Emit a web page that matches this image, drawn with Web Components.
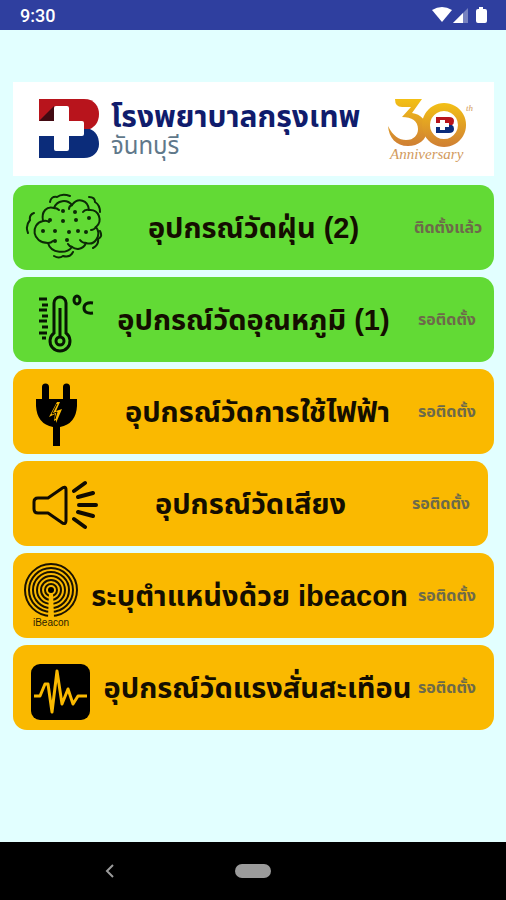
<!DOCTYPE html>
<html lang="th">
<head>
<meta charset="utf-8">
<meta name="viewport" content="width=device-width, initial-scale=1">
<title>โรงพยาบาลกรุงเทพ จันทบุรี</title>
<style>
  body {
    margin: 0;
    font-family: "Liberation Sans", "Noto Sans Thai", sans-serif;
  }
</style>
</head>
<body>
<sensor-app></sensor-app>

<script>
const icons = {
  dust: `
    <g fill="none" stroke="#0c2a06" stroke-width="2" stroke-linecap="round">
      <path d="M30 36C28 26 34 21 41 23C44 15 54 14 59 20C65 12 75 15 76 25C86 24 90 36 83 42C89 50 82 61 73 58C70 65 63 65 59 62C54 69 38 69 35 58C19 58 17 39 30 36Z"/>
      <path d="M59 20q-3 1-3 4M76 25q-4-1-6 2M83 42q-2 3-5 3M73 58q-4 0-6-3M59 62q-3-1-4-3M35 58q3 0 5-2M30 36q4-1 6 1M41 23q3 0 5 2"/>
      <path d="M37 17q1-6 7-5q5-4 13-1M76 12q6 0 6 5q5 3 5 10M87 46q3 6-2 8q1 6-5 9M41 71q5 3 9 0q7 2 10-4M21 28q-5 2-4 7q-5 6-2 13"/>
    </g>
    <g fill="#0c2a06">
      <circle cx="50" cy="26" r="2"/><circle cx="62" cy="27" r="2"/><circle cx="37" cy="35" r="2"/>
      <circle cx="50" cy="36" r="2"/><circle cx="63" cy="35" r="2"/><circle cx="76" cy="33" r="2"/>
      <circle cx="30" cy="46" r="2"/><circle cx="42" cy="46" r="2"/><circle cx="56" cy="47" r="2"/>
      <circle cx="65" cy="46" r="2"/><circle cx="73" cy="47" r="2"/><circle cx="42" cy="56" r="2"/>
      <circle cx="54" cy="55" r="2"/>
    </g>`,
  temperature: `
    <g fill="none" stroke="#071703" stroke-width="3">
      <path d="M41 56V26a6 6 0 0 1 12 0V56a10 10 0 1 1-12 0Z"/>
      <circle cx="47" cy="64" r="4"/>
      <path d="M47 60V31"/>
      <path d="M26 22h8M29 28h6M26 33h8M29 39h6M26 44h8M29 50h6M26 56h8M29 61h4"/>
      <ellipse cx="64" cy="23" rx="3" ry="4"/>
      <path d="M80 26q-9-1-9 5t9 5"/>
    </g>`,
  power: `
    <path d="M29 18a3 3 0 0 1 7 0V30h14V18a3 3 0 0 1 7 0V30h7v7q-1 18-17 21V77h-7V58q-16-3-17-21v-7h6Z"/>
    <path d="M44 33h3l-4 9l6-2l-6 14v-3l-2 1l1-7l-6 3Z" fill="#fab900"/>
    <path d="M44 35l-5 10l5-2l-2 7" fill="none" stroke="#000"/>`,
  sound: `
    <g fill="none" stroke="#110c00" stroke-width="3" stroke-linecap="round" stroke-linejoin="round">
      <path d="M21 41q0-4 4-4h10l13-9q5-4 5 1v30q0 6-5 2L35 52H25q-4 0-4-4Z"/>
      <path d="M61 30l11-8M65 36l15-4M66 44h17M65 51l15 4M61 58l11 8" stroke-width="4"/>
    </g>`,
  beacon: `
    <g fill="none" stroke="#1a1200" stroke-width="2">
      <circle cx="38" cy="37" r="26"/><circle cx="38" cy="37" r="22"/><circle cx="38" cy="37" r="18"/>
      <circle cx="38" cy="37" r="14"/><circle cx="38" cy="37" r="10"/><circle cx="38" cy="37" r="6"/>
    </g>
    <path d="M36 39h4l1 26h-6Z" fill="#fab900"/>
    <circle cx="38" cy="37" r="3"/>
    <text x="38" y="73" text-anchor="middle" font-size="10" fill="#2a1e00">iBeacon</text>`,
  vibration: `
    <rect x="18" y="19" width="59" height="56" rx="9"/>
    <path d="M21 51h6l5-12h3l4 28l5-41l5 33l6-15l5 15l5-8h9" fill="none" stroke="#fab900" stroke-width="3" stroke-linejoin="round"/>`
};

class StatusBar extends HTMLElement {
  constructor() {
    super();
    this.attachShadow({ mode: "open" }).innerHTML = `
      <style>
        :host {
          display: flex;
          align-items: center;
          justify-content: space-between;
          height: 30px;
          padding: 0 17px 0 20px;
          background: #2f3f9f;
          color: #fff;
          font: 500 18px "Roboto", sans-serif;
        }
        svg { display: block; }
      </style>
      <slot></slot>
      <svg width="58" height="30" fill="#fff" aria-hidden="true">
        <path d="M1 10q10-6 20 0L11 22Z"/>
        <path d="M22 23L37 8V23Z" opacity=".35"/>
        <path d="M22 23L32 13V23Z"/>
        <path d="M48 7h4v2h2q2 0 2 2v10q0 2-2 2h-7q-2 0-2-2V11q0-2 2-2h1Z"/>
      </svg>`;
  }
}

class HospitalBanner extends HTMLElement {
  constructor() {
    super();
    this.attachShadow({ mode: "open" }).innerHTML = `
      <style>
        :host {
          display: flex;
          align-items: center;
          height: 94px;
          padding: 0 18px 0 26px;
          background: #fff;
        }
        svg { display: block; flex: none; }
        .name { flex: 1; min-width: 0; margin-left: 12px; white-space: nowrap; }
        ::slotted(h1) {
          margin: 0;
          color: #101c6c;
          font-size: 30px;
          line-height: 34px;
        }
        ::slotted(p) {
          margin: 0;
          color: #60788a;
          font-size: 24px;
          line-height: 24px;
        }
      </style>
      <svg width="60" height="60" aria-hidden="true">
        <path d="M0 0H45C56 0 60 8 60 15C60 24 55 28 51 30H0Z" fill="#b8141c"/>
        <path d="M0 30H51C56 32 60 37 60 45C60 53 54 59 45 59H0Z" fill="#0b2c7a"/>
        <path d="M0 22L15 7V22Z" fill="#420a12"/>
        <path d="M0 22H15V9q0-2 2-2H28q2 0 2 2V22H43q2 0 2 2V35q0 2-2 2H30V50q0 2-2 2H17q-2 0-2-2V37H0Z" fill="#fff"/>
      </svg>
      <div class="name"><slot></slot></div>
      <svg width="90" height="72" aria-hidden="true">
        <defs>
          <linearGradient id="gold" x1="0" y1="0" x2="0" y2="1">
            <stop offset="0" stop-color="#f3c015"/>
            <stop offset="1" stop-color="#cf7f34"/>
          </linearGradient>
        </defs>
        <path d="M9 6H36L26 20C35 21 41 28 41 37C41 47 32 53 22 53C10 53 3 45 2 33C7 43 13 47 20 47C28 47 32 42 32 36C32 28 26 24 16 24L25 14H16Q9 14 9 6Z" fill="url(#gold)"/>
        <path d="M58 10a22 22 0 1 0 .1 0ZM58 18a14 14 0 1 1-.1 0Z" fill="url(#gold)" fill-rule="evenodd"/>
        <path d="M50 24H63q5 0 5 4q0 3-2 4H50Z" fill="#b8141c"/>
        <path d="M50 32H66q2 1 2 4q0 4-5 4H50Z" fill="#0b2c7a"/>
        <path d="M50 30h4v-3h5v3h4v4h-4v3h-5v-3h-4Z" fill="#fff"/>
        <g fill="#d29a5c" font-family="Liberation Serif, serif" font-style="italic">
          <text x="80" y="18" font-size="9">th</text>
          <text x="4" y="66" font-size="15">Anniversary</text>
        </g>
      </svg>`;
  }
}

class SensorCard extends HTMLElement {
  constructor() {
    super();
    this.attachShadow({ mode: "open" }).innerHTML = `
      <style>
        :host { display: block; }
        button {
          display: flex;
          align-items: center;
          width: 100%;
          height: 85px;
          padding: 0 14px 0 0;
          border: 0;
          border-radius: 14px;
          background: var(--card-color, #fab900);
          color: #140e00;
          font: inherit;
          cursor: pointer;
        }
        svg {
          flex: none;
          width: var(--icon-width, 80px);
          height: 85px;
          overflow: visible;
        }
        .title {
          flex: 1;
          display: flex;
          justify-content: center;
          min-width: 0;
          font-size: 29px;
          font-weight: bold;
          line-height: 40px;
          white-space: pre;
        }
        .status {
          flex: none;
          width: 66px;
          color: #6d6a4a;
          font-size: 16px;
          font-weight: bold;
          text-align: center;
          white-space: nowrap;
        }
      </style>
      <button type="button">
        <svg aria-hidden="true">${icons[this.getAttribute("icon")]}</svg>
        <span class="title"><slot></slot></span>
        <span class="status"><slot name="status"></slot></span>
      </button>`;
  }
}

class NavBar extends HTMLElement {
  constructor() {
    super();
    this.attachShadow({ mode: "open" }).innerHTML = `
      <style>
        :host {
          display: grid;
          grid-template-columns: 1fr auto 1fr;
          gap: 16px;
          align-items: center;
          height: 58px;
          background: #000;
        }
        button { padding: 0; border: 0; background: none; }
        .back { justify-self: center; width: 32px; height: 32px; }
        .home { width: 36px; height: 14px; border-radius: 7px; background: #9b9b9b; }
        svg { display: block; margin: auto; }
      </style>
      <button class="back" type="button" aria-label="ย้อนกลับ">
        <svg width="10" height="14"><path d="M8 1L2 7L8 13" fill="none" stroke="#9b9b9b" stroke-width="2"/></svg>
      </button>
      <button class="home" type="button" aria-label="หน้าแรก"></button>`;
  }
}

class SensorApp extends HTMLElement {
  constructor() {
    super();
    this.attachShadow({ mode: "open" }).innerHTML = `
      <style>
        :host {
          display: flex;
          flex-direction: column;
          min-height: 100vh;
          background: #e2ffff;
        }
        main { flex: 1; padding: 52px 12px 12px 13px; }
        .cards { display: grid; gap: 7px; margin-top: 9px; }
        .ready { --card-color: #62da35; }
        .wide { --icon-width: 88px; }
        .narrow { --icon-width: 72px; }
        .short { margin-right: 6px; }
      </style>
      <status-bar>9:30</status-bar>
      <main>
        <hospital-banner>
          <h1>โรงพยาบาลกรุงเทพ</h1>
          <p>จันทบุรี</p>
        </hospital-banner>
        <div class="cards">
          <sensor-card class="ready" icon="dust">อุปกรณ์วัดฝุ่น (2)<span slot="status">ติดตั้งแล้ว</span></sensor-card>
          <sensor-card class="ready" icon="temperature">อุปกรณ์วัดอุณหภูมิ (1)<span slot="status">รอติดตั้ง</span></sensor-card>
          <sensor-card class="wide" icon="power">อุปกรณ์วัดการใช้ไฟฟ้า<span slot="status">รอติดตั้ง</span></sensor-card>
          <sensor-card class="short" icon="sound">อุปกรณ์วัดเสียง<span slot="status">รอติดตั้ง</span></sensor-card>
          <sensor-card class="narrow" icon="beacon">ระบุตำแหน่งด้วย ibeacon<span slot="status">รอติดตั้ง</span></sensor-card>
          <sensor-card class="wide" icon="vibration">อุปกรณ์วัดแรงสั่นสะเทือน<span slot="status">รอติดตั้ง</span></sensor-card>
        </div>
      </main>
      <nav-bar></nav-bar>`;
  }
}

customElements.define("status-bar", StatusBar);
customElements.define("hospital-banner", HospitalBanner);
customElements.define("sensor-card", SensorCard);
customElements.define("nav-bar", NavBar);
customElements.define("sensor-app", SensorApp);
</script>
</body>
</html>
